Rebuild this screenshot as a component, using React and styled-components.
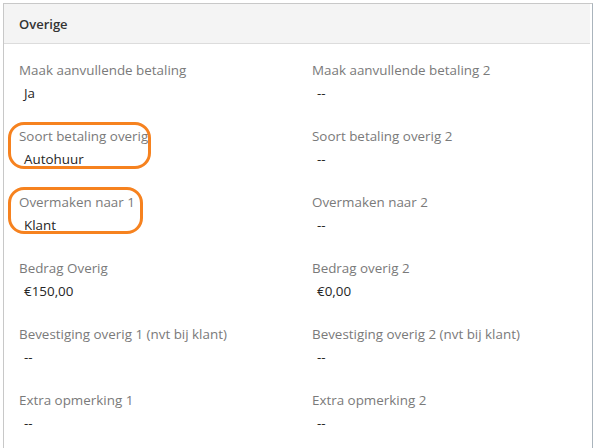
import React from "react";
import styled, { createGlobalStyle } from "styled-components";

const Global = createGlobalStyle`
  html, body { margin: 0; padding: 0; background: #fff; }
  body { font-family: "Open Sans", "Noto Sans", sans-serif; }
`;

const Page = styled.div`
  padding: 3px 6px 0 3px;
  width: 599px;
  height: 448px;
  box-sizing: border-box;
  overflow: hidden;
`;

const Panel = styled.section`
  border: 1px solid #c8c8c8;
  border-right-color: #aab4bc;
  border-bottom: none;
  height: 460px;
  box-sizing: border-box;
`;

const Header = styled.header`
  background: #f4f4f4;
  border-bottom: 1px solid #dcdcdc;
  margin-right: 2px;
  height: 40px;
  box-sizing: border-box;
  display: flex;
  align-items: center;
  padding-left: 15px;
  font-size: 13px;
  font-weight: 600;
  color: #333;
`;

const Grid = styled.div`
  display: grid;
  grid-template-columns: 293px 293px;
  padding: 16px 0 0 15px;
`;

const Field = styled.div`
  position: relative;
  height: 66px;
`;

const Label = styled.div`
  font-size: 13.4px;
  line-height: 20px;
  color: #7a7a7a;
  white-space: nowrap;
`;

const Value = styled.div`
  font-size: 13.4px;
  line-height: 20px;
  margin-top: 3px;
  padding-left: 5px;
  color: #262626;
  white-space: nowrap;
`;

const Highlight = styled.div`
  position: absolute;
  left: -11px;
  top: ${(p) => p.$top}px;
  width: ${(p) => p.$w}px;
  height: 47px;
  border: 3px solid #f6821f;
  border-radius: 16px;
  box-sizing: border-box;
  pointer-events: none;
`;

const fields = [
  ["Maak aanvullende betaling", "Ja"],
  ["Maak aanvullende betaling 2", "--"],
  ["Soort betaling overig", "Autohuur", 143, -4],
  ["Soort betaling overig 2", "--"],
  ["Overmaken naar 1", "Klant", 135, -5],
  ["Overmaken naar 2", "--"],
  ["Bedrag Overig", "€150,00"],
  ["Bedrag overig 2", "€0,00"],
  ["Bevestiging overig 1 (nvt bij klant)", "--"],
  ["Bevestiging overig 2 (nvt bij klant)", "--"],
  ["Extra opmerking 1", "--"],
  ["Extra opmerking 2", "--"],
];

export default function App() {
  return (
    <>
      <Global />
      <Page>
        <Panel>
          <Header>Overige</Header>
          <Grid>
            {fields.map(([l, v, hw, ht]) => (
              <Field key={l}>
                {hw && <Highlight $w={hw} $top={ht} />}
                <Label>{l}</Label>
                <Value>{v}</Value>
              </Field>
            ))}
          </Grid>
        </Panel>
      </Page>
    </>
  );
}
